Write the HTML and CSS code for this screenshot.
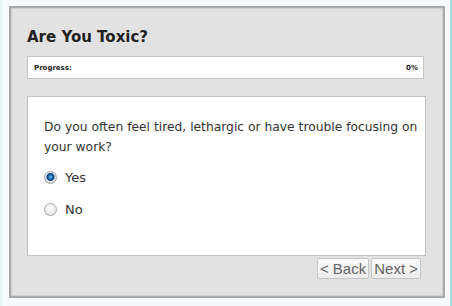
FILE: index.html
```
<!doctype html>
<html>
<head>
<meta charset="utf-8">
<title>Are You Toxic?</title>
<link rel="stylesheet" href="styles.css">
</head>
<body>
<div class="page">
	<div class="quiz">
		<h1 class="quiz-title">Are You Toxic?</h1>
		<div class="progress">
			<span>Progress:</span>
			<span>0%</span>
		</div>
		<div class="question">
			<p class="question-text">Do you often feel tired, lethargic or have trouble focusing on your work?</p>
			<label class="answer"><input type="radio" name="q1" checked> Yes</label>
			<label class="answer"><input type="radio" name="q1"> No</label>
		</div>
		<div class="nav">
			<button class="nav-btn">&lt; Back</button>
			<button class="nav-btn">Next &gt;</button>
		</div>
	</div>
</div>
</body>
</html>
```
FILE: styles.css
```
*{margin: 0; padding: 0; box-sizing: border-box;}
body { background: #f6fafc; }
.page {
	width: 452px;
	height: 306px;
	padding: 6px 0 0 7px;
	border-left: 2px solid #eaf5fa;
	border-right: 2px solid #a8dcef;
}
.quiz {
	width: 436px;
	height: 292px;
	background: #e1e2e1;
	border: 2px solid #a9aaa9;
	box-shadow: inset 0 0 0 1px #cfd0cf;
	padding: 19px 16px 0 16px;
	font-family: "DejaVu Sans", Verdana, sans-serif;
}
.quiz-title {
	font-size: 15px;
	line-height: 20px;
	font-weight: bold;
	color: #222;
	margin-bottom: 9px;
}
.progress {
	width: 397px;
	height: 23px;
	background: #fff;
	border: 1px solid #c3c4c3;
	display: flex;
	justify-content: space-between;
	align-items: center;
	padding: 0 5px 0 6px;
	font-size: 7px;
	font-weight: bold;
	color: #222;
}
.question {
	margin-top: 17px;
	width: 399px;
	height: 160px;
	background: #fff;
	border: 1px solid #bfc0bf;
	padding: 20px 1px 0 16px;
	color: #333;
}
.question-text {
	font-size: 12.3px;
	line-height: 20px;
	margin-bottom: 10px;
}
.answer {
	display: flex;
	align-items: center;
	height: 20px;
	margin-bottom: 12px;
	font-size: 13px;
	color: #333;
}
.answer input {
	-webkit-appearance: none;
	appearance: none;
	width: 13px;
	height: 13px;
	border-radius: 50%;
	border: 1px solid #a8a8a8;
	background: radial-gradient(circle at 45% 35%, #ffffff, #dcdcdc);
	margin-right: 8px;
}
.answer input:checked {
	background: radial-gradient(circle at 50% 45%, #7fc4f0 0, #1a6fb5 2px, #0d3f73 3.5px, #e9e9e9 4.5px, #cfcfcf 6px);
}
.nav {
	width: 394px;
	display: flex;
	justify-content: flex-end;
	gap: 2px;
	margin-top: 2px;
}
.nav-btn {
	height: 21px;
	padding: 0 2px;
	font-family: "Liberation Sans", Arial, sans-serif;
	font-size: 15px;
	color: #666;
	background: linear-gradient(#fafafa, #ececec);
	border: 1px solid #c6c6c6;
	border-radius: 2px;
}
```
